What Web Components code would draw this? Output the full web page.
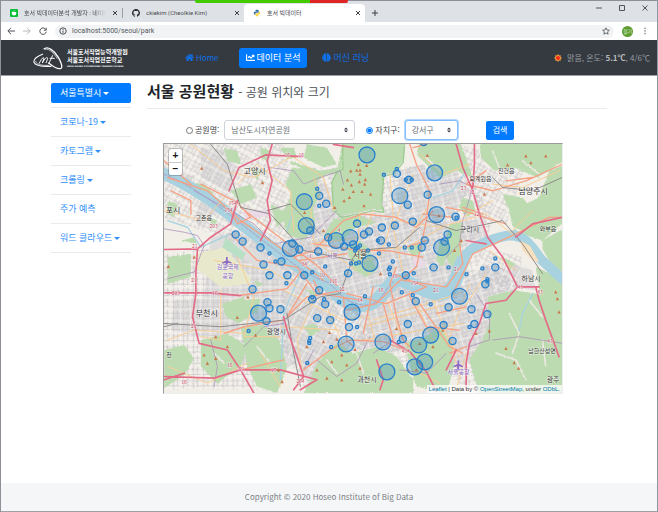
<!DOCTYPE html>
<html lang="ko">
<head>
<meta charset="utf-8">
<title>호서 빅데이터</title>
<style>
html,body{margin:0;height:100%}
body{font-family:"Noto Sans CJK KR","Noto Sans",sans-serif;font-size:9px;line-height:12px;color:#212529;background:#fff}
</style>
</head>
<body>
<park-app></park-app>
<script>
function define(name, html, setup) {
  const t = document.createElement('template');
  t.innerHTML = '<style>*{box-sizing:border-box}a{text-decoration:none}button,select,input{font:inherit;margin:0}</style>' + html;
  customElements.define(name, class extends HTMLElement {
    constructor() {
      super();
      this.attachShadow({mode: 'open'}).append(t.content.cloneNode(true));
    }
    connectedCallback() { if (setup) setup(this.shadowRoot, this); }
  });
}

define('browser-tab', `
<style>
:host{display:flex;align-items:center;gap:6px;padding:0 4px 0 9px;height:18px;flex:0 1 121px;min-width:0;font-size:6px;color:#4a4d51}
:host([active]){background:#fff;border-radius:4px 4px 0 0}
.t{flex:1;min-width:0;white-space:nowrap;overflow:hidden}
:host([fade]) .t{-webkit-mask-image:linear-gradient(90deg,#000 85%,transparent)}
button{border:0;background:none;padding:0;width:6px;height:6px;display:flex}
svg{width:6px;height:6px}
::slotted(svg){width:9px;height:9px;flex:none}
</style>
<slot name="icon"></slot><span class="t"><slot></slot></span>
<button aria-label="탭 닫기"><svg viewBox="0 0 6 6"><path d="M1 1l4 4M5 1l-4 4" stroke="#3c4043" stroke-width="1"/></svg></button>`);

define('browser-bar', `
<style>
:host{display:block;position:relative;background:#dee1e6;border-top:1px solid #8d9096;font-family:Roboto,"Noto Sans CJK KR",sans-serif}
.tabs{display:flex;align-items:center;height:21px;padding-top:3px}
.sep{width:1px;height:10px;background:#9a9da2}
.add{margin-left:6px}
.win{margin-left:auto;display:flex;gap:15px;padding-right:8px;align-self:flex-start;padding-top:0}
.win button,.tools button,.add{border:0;padding:0;background:none;display:flex;width:8px;height:8px}
svg{width:8px;height:8px;overflow:visible}
.tools{display:flex;align-items:center;height:18px;background:#fff;padding:0 8px 0 6px;gap:8px}
.tools svg{fill:none;stroke:#4d5156;stroke-width:1}
.url{flex:1;display:flex;align-items:center;gap:5px;height:13px;border-radius:7px;background:#f1f3f4;padding:0 4px;font-size:7px;color:#73777b;min-width:0}
.url input{flex:1;min-width:0;border:0;background:none;padding:0;color:#55595e;outline:0}
.av{width:11px;height:11px;border-radius:50%;background:#5f9b31;color:#dcefcf;font-size:5px;line-height:11px;text-align:center}
.share{position:absolute;left:194px;top:-1px;width:153px;height:3px;border-radius:0 0 2px 2px;background:linear-gradient(90deg,#43cb00 75%,#e02424 75%)}
</style>
<div class="share"></div>
<div class="tabs">
<browser-tab fade><svg slot="icon" viewBox="0 0 9 9"><rect width="9" height="9" rx="1" fill="#06bf35"/><path d="M2 3.5h5v1.6a2.5 2.3 0 0 1-5 0z" fill="#fff"/><path d="M3 2.6h1M5 2h.8" stroke="#fff"/></svg>호서 빅데이터분석 개발자 : 네이버</browser-tab>
<span class="sep"></span>
<browser-tab><svg slot="icon" viewBox="0 0 16 16"><path fill="#24292e" d="M8 0C3.58 0 0 3.58 0 8c0 3.54 2.29 6.53 5.47 7.59.4.07.55-.17.55-.38 0-.19-.01-.82-.01-1.49-2.01.37-2.53-.49-2.69-.94-.09-.23-.48-.94-.82-1.13-.28-.15-.68-.52-.01-.53.63-.01 1.08.58 1.23.82.72 1.21 1.87.87 2.33.66.07-.52.28-.87.51-1.07-1.78-.2-3.64-.89-3.64-3.95 0-.87.31-1.59.82-2.15-.08-.2-.36-1.02.08-2.12 0 0 .67-.21 2.2.82a7.7 7.7 0 0 1 4 0c1.53-1.04 2.2-.82 2.2-.82.44 1.1.16 1.92.08 2.12.51.56.82 1.27.82 2.15 0 3.07-1.87 3.75-3.65 3.95.29.25.54.73.54 1.48 0 1.07-.01 1.93-.01 2.2 0 .21.15.46.55.38A8 8 0 0 0 16 8c0-4.42-3.58-8-8-8z"/></svg>ckiekim (Cheolkie Kim)</browser-tab>
<browser-tab active><svg slot="icon" viewBox="0 0 16 16"><path d="M8 1.500c-3 0-3 1-3 2v1.500h3.500v.6H3.500C2 5.600 1.500 7 1.500 8.500S2 11 3.500 11H5V9.500C5 8 6 7.500 7 7.500h3c1 0 1.500-.5 1.500-1.500V3.500c0-1.500-1.500-2-3.500-2z" fill="#3873a5"/><path d="M8 14.500c3 0 3-1 3-2V11H7.500v-.5h5c1.500 0 2-1.200 2-2.500S14 5.500 12.500 5.500h-.8v1.200C11.700 8 11 8.600 9.500 8.600h-3C5.500 8.600 5 9 5 10v2.500c0 1.500 1.500 2 3 2z" fill="#ffd242"/></svg>호서 빅데이터</browser-tab>
<button class="add" aria-label="새 탭"><svg viewBox="0 0 8 8"><path d="M4 1v6M1 4h6" stroke="#3c4043"/></svg></button>
<div class="win">
<button aria-label="최소화"><svg viewBox="0 0 8 8"><path d="M1 4h6" stroke="#555"/></svg></button>
<button aria-label="최대화"><svg viewBox="0 0 8 8"><path d="M1.500 1.500h5v5h-5z" fill="none" stroke="#555"/></svg></button>
<button aria-label="닫기"><svg viewBox="0 0 8 8"><path d="M1.500 1.500l5 5M6.500 1.500l-5 5" stroke="#555"/></svg></button>
</div></div>
<div class="tools">
<button aria-label="뒤로"><svg viewBox="0 0 8 8"><path d="M8 4H1M4 .8L.8 4 4 7.200"/></svg></button>
<button aria-label="앞으로"><svg viewBox="0 0 8 8"><path style="stroke:#b5b8bb" d="M0 4h7M4 .8L7.200 4 4 7.200"/></svg></button>
<button aria-label="새로고침"><svg viewBox="0 0 8 8"><path d="M6.800 2.500A3.200 3.200 0 1 0 7.200 4.700M7.200.8v2.400H4.800"/></svg></button>
<div class="url"><svg viewBox="0 0 8 8"><circle cx="4" cy="4" r="3.200"/><path d="M4 3.500v2.300M4 2v.9"/></svg><input aria-label="주소" value="localhost:5000/seoul/park"><svg viewBox="0 0 8 8"><path stroke-width=".8" d="M4 .8l1 2.200 2.400.2-1.800 1.600.5 2.400L4 6 1.900 7.200l.5-2.400L.6 3.200 3 3z"/></svg></div>
<span class="av">철기</span>
<button aria-label="메뉴"><svg viewBox="0 0 8 8"><path d="M4 .7v1.400M4 3.300v1.400M4 5.900v1.400"/></svg></button>
</div>`);

define('nav-link', `
<style>
:host{display:block}
a{display:flex;align-items:center;gap:2px;height:20px;padding:0 7px;color:#0f6fe8;border-radius:3px;white-space:nowrap}
:host([active]) a{background:#007bff;color:#fff}
::slotted(svg){width:9px;height:9px;fill:currentColor}
</style><a href="#"><slot></slot></a>`);

define('school-logo', `
<style>
:host{display:flex;align-items:center;gap:4px;color:#fff;width:96px}
svg{width:30px;height:24px;flex:none}
.n{font-size:6px;line-height:8px;font-weight:700;white-space:nowrap}
small{display:block;font-size:2px;line-height:4px;font-family:"DejaVu Sans",sans-serif}
</style>
<svg viewBox="0 0 90 72" fill="none" stroke="#fff"><path stroke-width="3.500" d="M30 24C12 31 1 41 3 49c4 11 28 13 52 12"/><path stroke-width="2" d="M8 45c1 10 14 14 40 13"/><path stroke-width="4" d="M32 10C44-2 64 14 76 34c10 18 13 29 8 33-6 3-22-4-38-17"/><path stroke-width="2" d="M36 10c13-3 26 11 37 28"/><path stroke-width="3" d="M18 53c5-9 9-17 13-18 4 0-1 10-3 16 5-9 10-17 14-16 4 0 0 9-3 16M47 54c4-10 9-19 12-26M50 37h15"/></svg>
<div class="n">서울호서직업능력개발원<br>서울호서직업전문학교<small>SEOUL HOSEO OCCUPATIONAL TRAINING COLLEGE</small></div>`);

define('site-nav', `
<style>
:host{display:flex;align-items:center;height:36px;background:#343a40;border-bottom:1px solid #9c9fa3;padding:0 7px 0 32px}
nav{display:flex;gap:8px;margin-left:49px}
nav-link:first-child{margin-right:5px}
.w{margin-left:auto;display:flex;align-items:center;gap:5px;color:#9a9da0;white-space:nowrap;font-size:8px}
.w b{color:#b9bbbd}.w svg{width:8px;height:8px}
</style>
<school-logo></school-logo>
<nav>
<nav-link><svg viewBox="0 0 576 512"><path d="M280 148L96 300v164a16 16 0 0 0 16 16h112a16 16 0 0 0 16-16v-96a16 16 0 0 1 16-16h64a16 16 0 0 1 16 16v96a16 16 0 0 0 16 16h112a16 16 0 0 0 16-16V300L296 148a12 12 0 0 0-16 0zm291 103l-83-69V44a12 12 0 0 0-12-12h-56a12 12 0 0 0-12 12v72l-89-73a48 48 0 0 0-61 0L5 251a12 12 0 0 0-2 17l26 31a12 12 0 0 0 17 2L280 107a12 12 0 0 1 16 0l235 194a12 12 0 0 0 17-2l25-31a12 12 0 0 0-2-17z"/></svg><span style="font-size:8px">Home</span></nav-link>
<nav-link active><svg viewBox="0 0 512 512"><path d="M496 384H64V80a16 16 0 0 0-16-16H16A16 16 0 0 0 0 80v336a32 32 0 0 0 32 32h464a16 16 0 0 0 16-16v-32a16 16 0 0 0-16-16zM464 96H346c-22 0-33 26-18 41l33 32-73 73-73-73a32 32 0 0 0-46 0l-64 64a16 16 0 0 0 0 23l23 22a16 16 0 0 0 23 0l41-41 73 73a32 32 0 0 0 46 0l96-96 32 33c15 15 41 4 41-17V112a16 16 0 0 0-16-16z"/></svg>데이터 분석</nav-link>
<nav-link><svg viewBox="0 0 16 16"><path d="M7.500 1.200v13.600C6 16 4 15.300 3.600 13.800 1.800 13.700.8 12 1.200 10.600-.2 9.600-.2 7 1.200 6 .8 4.400 2 3 3.300 2.800 3.600.9 6.200 0 7.500 1.200zM8.500 1.200v13.600c1.500 1.200 3.500.5 3.900-1 1.800-.1 2.800-1.800 2.400-3.200 1.400-1 1.400-3.600 0-4.600.4-1.600-.8-3-2.100-3.200C12.400.9 9.800 0 8.500 1.200z"/></svg>머신 러닝</nav-link>
</nav>
<div class="w"><svg viewBox="0 0 16 16"><path fill="#f6a13a" d="M8 0l2 2.800 3.600-.5-.5 3.600L16 8l-2.900 2.100.5 3.600-3.600-.5L8 16l-2-2.800-3.600.5.5-3.600L0 8l2.900-2.100-.5-3.600 3.600.5z"/><circle cx="8" cy="8" r="4" fill="#f5261b"/></svg><span>맑음, 온도: <b>5.1℃</b>, 4/6℃</span></div>`);

define('menu-item', `
<style>
:host{display:block;border-bottom:1px solid #e9ebed;padding:4px 0}
a{display:flex;align-items:center;gap:2px;height:20px;padding:0 9px;color:#318ffb;border-radius:2px;white-space:nowrap}
:host([active]) a{background:#007bff;color:#fff}
:host([drop]) a::after{content:"";border:3px solid transparent;border-top-color:currentColor;border-bottom:0}
</style><a href="#"><slot></slot></a>`);

define('side-menu', `
<style>:host{display:block;padding-top:3px}</style>
<menu-item active drop>서울특별시</menu-item><menu-item drop>코로나-19</menu-item><menu-item drop>카토그램</menu-item><menu-item drop>크롤링</menu-item><menu-item>주가 예측</menu-item><menu-item drop>워드 클라우드</menu-item>`);

define('page-title', `
<style>
:host{display:block;border-bottom:1px solid #e9ebed;padding:4px 0 5px}
h1{margin:0;font-size:15px;line-height:22px;font-weight:700}
small{font-size:12px;font-weight:400;color:#4b5056}
</style><h1><slot></slot> <small><slot name="sub"></slot></small></h1>`);

define('park-search', `
<style>
:host{display:block;font-size:8px}
form{display:flex;align-items:center;padding:11px 0 3px 39px}
input{width:7px;height:7px;margin-right:2px;accent-color:#007bff}
label{white-space:nowrap;margin-right:5px;color:#3e4348}
select{appearance:none;height:20px;border:1px solid #ced4da;border-radius:3px;padding:0 12px 0 6px;color:#6a7076;font-size:8px;background:#fff url("data:image/svg+xml,%3Csvg xmlns='http://www.w3.org/2000/svg' viewBox='0 0 4 5'%3E%3Cpath fill='%23343a40' d='M2 0L0 2h4zm0 5L0 3h4z'/%3E%3C/svg%3E") no-repeat right 6px center/4px 6px}
#ps{width:131px;margin-right:11px}
#gs{width:53px;margin-right:28px;border-color:#80bdff;box-shadow:0 0 0 1px #b3d7ff}
button{border:0;border-radius:2px;height:19px;padding:0 7px;background:#007bff;color:#fff}
</style>
<form onsubmit="return false">
<input type="radio" name="by" id="p"><label for="p">공원명:</label>
<select id="ps" aria-label="공원명"><option>남산도시자연공원</option></select>
<input type="radio" name="by" id="g" checked><label for="g">자치구:</label>
<select id="gs" aria-label="자치구"><option>강서구</option></select>
<button type="submit">검색</button>
</form>`);

define('park-map', `
<style>
:host{display:block;position:relative;overflow:hidden;margin:0 44px 0 16px;border:1px solid;border-color:#9a9a9a #eee #eee #9a9a9a}
svg{display:block;width:100%;height:auto}
.zoom{position:absolute;left:5px;top:5px;display:flex;flex-direction:column;border-radius:2px;background:#fff;box-shadow:0 0 0 1px rgba(0,0,0,.2)}
.zoom button{width:13px;height:13px;border:0;padding:0;background:none;font:700 10px/12px "Liberation Sans",sans-serif;color:#111}
.zoom button+button{border-top:1px solid #ccc}
.attr{position:absolute;right:0;bottom:0;background:rgba(255,255,255,.75);font:6px/8px "Liberation Sans",sans-serif;padding:0 2px;color:#333;white-space:nowrap}
.attr a{color:#0078a8}
text{font-family:"Noto Sans CJK KR","Noto Sans",sans-serif;text-anchor:middle;paint-order:stroke;stroke:#fff;stroke-opacity:.6;stroke-width:1px;fill:#333}
</style>
<svg viewBox="0 0 400 250" role="img" aria-label="서울 공원 지도">
<defs>
<filter id="rough" x="-5%" y="-5%" width="110%" height="110%"><feTurbulence type="fractalNoise" baseFrequency=".09" numOctaves="3" seed="4"/><feDisplacementMap in="SourceGraphic" scale="7" xChannelSelector="R" yChannelSelector="G"/></filter>
<pattern id="g1" width="46" height="40" patternUnits="userSpaceOnUse" patternTransform="rotate(-14)"><path d="M0 8h46M0 22h46M0 33h20M8 0v40M22 0v22M34 0v40M15 22v18" fill="none" stroke="#c6c3c8" stroke-width="2"/><path d="M0 39h46M45 0v40" stroke="#f6f4f2" stroke-width="2"/></pattern>
<pattern id="g2" width="38" height="44" patternUnits="userSpaceOnUse" patternTransform="rotate(28)"><path d="M0 8h38M0 20h22M0 33h38M8 0v44M21 0v33M30 12v32" fill="none" stroke="#c6c3c8" stroke-width="2"/><path d="M0 43h38M37 0v44" stroke="#f6f4f2" stroke-width="2"/></pattern>
<pattern id="g3" width="30" height="34" patternUnits="userSpaceOnUse"><path d="M0 9h30M0 24h30M8 0v34M20 0v24" fill="none" stroke="#c6c3c8" stroke-width="2"/><path d="M0 33h30M29 0v34" stroke="#f6f4f2" stroke-width="2"/></pattern>
</defs>
<g transform="scale(.33333) translate(-9 -9)" fill="none" stroke-linejoin="round" stroke-linecap="round">
<path fill="#f2efe9" d="M0 0h1218v768H0z"/>
<g filter="url(#rough)">
<g fill="#dfdddb">
<path d="M120 20l110 10-20 130-90-50zM20 80l80 30-20 20zM150 290l130-30 190 150 70 110-60 110-110 60-60-110-90-60-90-50zM40 480l150-10 60 110-130 10-90-20zM450 90l70 60 10 60 100 20 80-20 10-120 70-20 60 90 40 200-30 140-90 40-100-60-60 60-90-70-110-60-30-80 50-100zM620 510l100-90 150 50 110-100 70 20 10 90-70 140-80 60-100-60-140 20-110-20zM350 520l100 10 100 80-110 110-70-120zM150 600h100l30 60-110 30zM800 20l70 50 60 80-60 80-60-80zM110 180l60 30-60 60zM880 240h90l10 50-80 30zM1060 370l60 20 10 60-70-10z"/></g>
<path fill="url(#g2)" d="M9 9h360l60 240 120 200-60 60-200-180L9 230z"/>
<path fill="url(#g3)" d="M9 340l180-20 170 100 40 170-60 160H9z"/>
<path fill="url(#g1)" d="M400 80h320l190-20 90 180-60 180-90 60-200-40-90 70-110-70z"/>
<path fill="url(#g1)" d="M620 510l100-90 150 50 110-100 80 20-70 260-60 110-100-100-130 20-110-20z"/>
<path fill="url(#g2)" d="M360 440l250 70 20 100-200 130-70-130zM900 10l200 60-60 180-90-20zM960 320l130 30-20 100-90 10z"/>
<g fill="#bddbb1">
<path d="M548 0h187l-5 60-30 35-28 5-7 80 7 30-32-5-40 10-55 10-25-20-5-85 15-30z"/>
<path d="M390 60l60 20 30 10 60-10v20l-35 0-35 10-50-30-30-10zM440 10l60 10 30 50-40 10-60-30zM395 80l80 10 20 15-25 15 10 40-20 40 5 60-35 40-50-20-15-60 30-60-20-30z"/>
<path d="M780 0l120 0 20 50 20 60-50-20-50 20-40-40-30-30zM960 0h255v60l-80 50-70-30-60 10-40-40zM1170 90l50-20v170l-70 60-60-20-30-60 40-30 40-20z"/>
<path d="M870 250l40-5-5 70-10 80-30-30-10-40zM910 170l30 10 8 30-25 20-25-30zM1150 300l70-40v150l-30-15-40-70zM1030 160l60 10 40 50-40 50-30-10-10-50z"/>
<path d="M985 470l75-20 70 10 90-40v348H960l-30-110 40-60 20-50zM1130 380l90 40-10 60-70-30z"/>
<path d="M430 760l40-90 60-60 50 30 70-20 60 30 50 70 0 40zM735 610l60-20 50-30 30 60 10 60-25 80-90-20-20-60zM520 235l80-10 50 20-70 20-40 40-50-20z"/>
<path d="M120 600l80-20 60 40-20 60-70 50-50-50zM10 630l60-15 30 40-30 50-60 40zM240 560l70-5 50 50 20 80-30 75-60-20-30-60zM20 350l70-10v70l-70 20zM185 490l65-20 15 60-30 20-40-20zM560 320l40-20 30 30 20 60-30 20-40-20z"/>
<path d="M20 180l30 10-10 40-20-10zM190 20l40 10 10 40-40-10zM60 120l70 10 30 30-80-10zM30 40l30 10-10 20zM210 150l60-20 20 40-50 20zM330 190l60 30-40 40zM250 480l50-5-10 40-30 10zM740 320l40-10 10 20-30 20zM1030 350l40 20-20 20zM430 560l30-10 20 20-30 20zM840 300l30 20-20 60-20-20zM300 20l30 10-10 30-20-10zM360 20l40 0 10 30-30 5zM140 230l30 10-10 20zM60 300l40-10 10 20zM270 80l30 10-10 30zM430 440l40 20-10 10zM280 420l30 10-20 10z"/></g>
<path fill="#e7e8cc" d="M110 340l80-20 80 90 0 20-90 10-80-60z"/><path fill="#ead9e6" d="M240 215l80-10 10 20-70 10zM760 345l40 20-10 15-30-5z"/>
<path fill="#b9dfc5" d="M195 290l60 50-10 20-60-40zM50 110l50 60 30 10zM1010 285l60-20 10 15-50 10z"/>
<g stroke="#eae8e0" stroke-width="5"><path d="M590 640l20 60M500 660l30 40M1050 520l30 60-20 60M1110 480l40 50M1010 640l60 20 30 60M1150 600l10 80M800 50l40 40M1000 30l20 50M1090 60l50 40M290 620l40 50M160 640l30 30"/></g>
<path stroke="#9ccb90" stroke-width="4" d="M548 0v85l-18 10-15 30 5 85 25 20 55-10 40-10 32 5-7-30 7-80 28-5 30-35 5-60"/>
</g>
<g stroke="#a9d2e0">
<path stroke-width="36" d="M0 96C60 120 100 145 150 180s110 85 190 145c50 38 100 80 160 100"/>
<path stroke-width="42" d="M490 425c30 10 35 60 110 70 60 0 65-40 100-70 30-20 60 20 130 35 60 5 60-60 78-95"/>
<path stroke-width="30" d="M908 365c10-40 70-65 132-79 50-8 70 20 105 70l65 60"/>
<path stroke-width="4" d="M20 240l60 20 40 60 90-40M420 400l-50 120-10 200M920 90l-40 60-60 20M1120 460l-30 60-10 50M400 210l-20 60M690 430l-60 10"/></g>
<path fill="#f8dfbe" d="M1082 300l30 15 28 50-20-5-30-30z"/>
<g stroke="#a98bb8" stroke-width="3" opacity=".75"><path stroke-dasharray="9 5" d="M9 100C60 120 100 145 150 180s110 85 190 145c50 38 100 80 160 100 30 15 40 60 110 70 60 0 55-40 90-70"/><path d="M10 265l60 10 40 10 20 30-30 80-80 20M480 110l-50 20-30-40-70-10M480 110l60-20 10 40M530 210l-80 80-110 20-60-60L100 150M910 240l30-100-40-20-60 10M910 240l-10 70-40 40M150 600l20 80-10 60M250 620l60-60 60-10M430 690l30-60M470 660l60 50 60-40 40-80M930 620l60-20 0-80-40-60M1000 600l80-10 130 20M860 640l-60 60-80-10M700 600l-60 40"/></g>
<g stroke="#f8cd94" stroke-width="3">
<path d="M90 10l100 80 90 20 110-60M230 130l60-60 100 80 10 120M400 50l90 60 30 100M450 180l10 120 130 90M480 180l-20-70M600 215l-10 130 40 60M640 210l-30 80-160 20M690 100l10 130-40 120-90 20M720 240l120 20 140-40 80 60M760 100l-60 160 30 140M810 190l-80 130M850 260l-110 60-120 10M620 510l30 110M680 480l60 140M750 450l70 150M820 480l60 150M610 560l260-70M610 600l300-50M640 540l260-80M930 430l-60 160 30 120M980 400l-70 110M460 480l-50 120 20 120M500 500l60 140M370 450l180 90 60-10M360 560l180 10M230 350l50 120-30 120 110 0M160 360l170 30 80 50M180 450v150l-60-10M20 600l80-30 150 10M20 680l120 50 120-60M300 640l60 100M780 40l70 60 80-30M1000 130l90 10 110-50M1000 180l-90 50M1060 270l60-60M990 330l80 60M920 640l-30 110M760 690l80 40M850 570l50 80M10 210l120 30 60-70"/></g>
<g stroke="#f6a184" stroke-width="4">
<path d="M10 60l80 70M20 110l120 40 100 90 160 110 90 70M30 150l60 30 0 40M240 200l110 85 120 90 60 60M120 130l110 55 40 45-40 20-20-40M400 350l60-20 90-90 60-20 100 10 60 30 50-50M420 360l140-20M460 310l140 20M750 10l20 60 40 80-10 90-30 140-60 50-60 60-90 20M800 10l-40 10M860 200l50 10 130 40M790 220l90 10M900 310l10 60-50 70-130-20M700 400l100 40M880 460l60-120 130-60 100-50 40 0M690 430l20 100 20 70 30 30M560 460l120 30 120-50M460 420l20 40 120 20M550 470l10 130 20 20M380 530l60-60 110-20M380 530l60-100M430 690l80-60 60-30 100 5 80 30M670 490l30 110M640 440l-30 140M710 380l-20 50M750 470l50 90 100 10M780 490l90 130 40 20M920 500l-90 20M920 620l-50 20M240 465l140-20 40-50M210 280l80 80 120 20 60 80M970 220l-60-20M980 90l-60 40 80 20 100-30 110-50M1040 120l80-10M190 580l60-20 120-20M240 690l130-30M740 320l60-20M590 330l90 0 110 20"/></g>
<g stroke="#8d8a8b" stroke-width="3"><path d="M150 10l50 60 40 130 90 20 100 110 150 30M10 550l170 10 190-20 110-70 60-10 40-110M380 520l20 120 20 100M480 280l-90-90-70 20M800 240l90 30 140-30 60 70 60 90M1000 110l30 30 90 10 90-40M10 560l40-10M590 330l120-10 70-60"/></g>
<g stroke="#e36b87" stroke-width="5">
<path d="M335 10l-15 50 15 60-15 60 10 60-30 60M205 150l30-70 80-38 110 5M230 180l-20 70-60 40-40 35-100 2M110 325l-5 75 0 60-10 70 20 80 85 20 40 60 40 70M10 458h140l90 8M10 710l150 5 80-25h120l110 30-50 30M10 720l60-20M370 530l10 40 30 80 20 60-30 40M890 10l20 70 30 70 20 70 25 70 45 60 45 90h65M945 10l0 60-5 70M1075 440l-35 40-60 10-20 60-30 60-10 60v80M1130 440l10 40 20 60 40 110M1070 290l50-40 90-20M920 300l60 10M690 600l60 35 50 60 30 60M520 10l60 10M650 660l20 60-10 30M860 690l30-60"/></g>
<g id="peaks" fill="#c9774c"></g>
<g fill="#8b69c5"><path d="M196 350h5v10l12 6v4l-12-3v8l4 4h-14l4-4v-8l-11 3v-4l12-6zM894 662h5v10l12 6v4l-12-3v8l4 4h-14l4-4v-8l-11 3v-4l12-6z"/></g>
</g>
<g id="roads" font-size="5"></g>
<g id="names"></g>
<g id="parks" fill="#3388bb" fill-opacity=".3" stroke="#2880cc" stroke-width="1.300"></g>
</svg>
<div class="zoom"><button aria-label="확대">+</button><button aria-label="축소">−</button></div>
<div class="attr"><a href="#">Leaflet</a> | Data by © <a href="#">OpenStreetMap</a>, under <a href="#">ODbL</a>.</div>`, root => {
  const rows = s => s.trim().split(/\s*;\s*/).map(r => r.trim().split(/\s+/));
  const at = id => root.getElementById(id);
  const big = '367 154;304 201;400 195;435 172;306 225;336 240;350 237;370 263;437 214;442 247;290 248;258 313;352 312;346 344;383 342;387 372;419 345;415 367;425 362;431 335;460 296';
  const mid = '235 234;242 241;260 247;292 243;263 264;281 261;299 249;319 195;326 203;397 173;409 179;408 204;428 194;310 230;328 237;344 246;353 244;357 223;364 234;369 231;382 227;395 225;413 221;381 240;422 247;425 240;318 251;456 216;448 234;445 241;434 267;496 267;269 275;287 275;252 289;267 302;269 308;266 321;280 309;304 275;348 273;319 290;312 299;325 304;317 318;330 320;349 327;406 275;416 301;408 324;403 339;444 325;453 341;449 307;486 284;472 309;488 314;475 324;424 141';
  const small = '269 253;275 261;317 188;319 205;384 174;397 168;406 179;412 179;378 240;389 244;405 247;412 247;368 250;379 253;360 245;358 247;356 248;355 250;351 263;356 263;359 262;325 266;393 261;390 267;457 217;449 267;496 258;483 268;286 283;248 331;312 272;312 297;324 299;339 302;365 296;357 327;310 338;309 343;309 341;331 347;307 363;389 269;390 274;414 273;402 292;413 295;399 342;431 304;467 274;488 279;488 281;470 327';
  at('parks').innerHTML = [[big, 8], [mid, 4], [small, 2]].map(([list, r]) =>
    rows(list).map(([x, y]) => `<circle cx="${x - 163}" cy="${y - 143}" r="${r - (r > 4 ? 0 : .4)}"/>`).join('')).join('');
  at('peaks').innerHTML = rows('595 70;572 90;590 88;600 88;620 73;562 117;574 132;598 122;616 116;614 130;600 100;548 145;580 152;606 152;632 160;568 170;552 180;524 200;612 195;123 82;306 125;803 43;433 215;490 270;100 350;22 378;262 470;230 532;165 590;130 645;165 655;200 620;140 670;285 585;355 690;365 725;508 577;530 597;490 605;585 628;545 645;515 665;560 675;470 690;500 715;545 720;600 685;780 610;820 620;850 570;770 690;745 690;710 565;950 580;990 572;1065 668;1078 685;1040 625;1190 455;1195 475;1200 515;1160 45;1100 45;1115 65;1045 72;838 225;905 300;885 330;662 400;440 620;975 160')
    .map(([x, y]) => `<path d="M${x - 5} ${+y + 5}l5-10 5 10z"/>`).join('');
  at('names').innerHTML = rows('91 30 8 고양시;9 69 8 포시;40 76 6 고촌읍;169 115 6 서울 #7d5a96;197 115 8 서울;307 88 7 구리시;318 37 6 퇴계원읍;344 29 6 진건읍;371 50 8 남양주시;386 87 6 와부읍;369 138 7 하남시;43 173 8 부천시;113 191 7 광명시;204 239 7 과천시;64 126 6 김포국제 #8461c4;64 135 6 공항 #8461c4;296 231 6 서울공항 #8461c4;380 210 6 남한산성면;391 239 7 광주;5 214 6 천')
    .map(([x, y, s, t, c]) => `<text x="${x}" y="${y}" font-size="${s}"${c ? ` style="fill:${c}"` : ''}>${t}</text>`).join('');
  at('roads').innerHTML = rows('124 13 16;138 13 16;69 61 154;65 68 154;50 84 203;12 152 203;51 152 16;31 105 21;30 139 21;30 185 21;66 224 16;78 228 29;110 229 17;20 241 16;137 240 264;159 134 10;170 140 116;179 148 12;197 159 14;218 149 16;176 88 4;252 142 154;273 149 21;294 128 21;301 46 23;309 50 12;314 72 12;358 146 43;378 151 43;243 210 414;147 115 1;141 123 84;388 200 43;232 135 19')
    .map(([x, y, t]) => `<text x="${x}" y="${y}" style="fill:#c43f62">${t}</text>`).join('');
});

define('site-footer', `
<style>:host{display:block;background:#f5f6f8;color:#7b8187;text-align:center;font-size:8px;line-height:12px;padding:8px;border-bottom:1px solid #9ea1a6}</style>
<footer><slot></slot></footer>`);

define('park-app', `
<style>
:host{display:flex;flex-direction:column;min-height:100vh;box-sizing:border-box;border-left:1px solid #8d9096;border-right:1px solid #8c97a8}
main{flex:1;display:grid;grid-template-columns:80px minmax(0,1fr);gap:16px;padding:0 50px;align-items:start}
</style>
<browser-bar></browser-bar>
<site-nav></site-nav>
<main>
<side-menu></side-menu>
<section>
<page-title>서울 공원현황<span slot="sub">- 공원 위치와 크기</span></page-title>
<park-search></park-search>
<park-map></park-map>
</section>
</main>
<site-footer>Copyright © 2020 Hoseo Institute of Big Data</site-footer>`);
</script>
</body>
</html>
